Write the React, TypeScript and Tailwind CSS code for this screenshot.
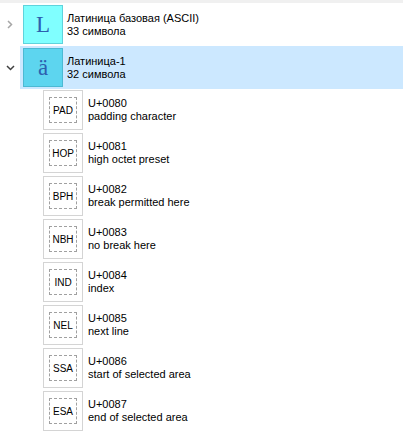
import React from "react";

const groups = [
  { glyph: "L", title: "Латиница базовая (ASCII)", count: "33 символа", open: false },
  { glyph: "ä", title: "Латиница-1", count: "32 символа", open: true },
];

const chars = [
  { abbr: "PAD", code: "U+0080", name: "padding character" },
  { abbr: "HOP", code: "U+0081", name: "high octet preset" },
  { abbr: "BPH", code: "U+0082", name: "break permitted here" },
  { abbr: "NBH", code: "U+0083", name: "no break here" },
  { abbr: "IND", code: "U+0084", name: "index" },
  { abbr: "NEL", code: "U+0085", name: "next line" },
  { abbr: "SSA", code: "U+0086", name: "start of selected area" },
  { abbr: "ESA", code: "U+0087", name: "end of selected area" },
];

const Chevron = ({ open }: { open: boolean }) =>
  open ? (
    <svg width="9" height="6" viewBox="0 0 9 6" className="text-[#404040]">
      <path d="M1 1l3.5 3.5L8 1" fill="none" stroke="currentColor" strokeWidth="1.5" />
    </svg>
  ) : (
    <svg width="6" height="9" viewBox="0 0 6 9" className="text-[#a6a6a6]">
      <path d="M1 1l3.5 3.5L1 8" fill="none" stroke="currentColor" strokeWidth="1.5" />
    </svg>
  );

export default function App() {
  return (
    <div className="w-[403px] h-[435px] bg-white overflow-hidden font-['Liberation_Sans',sans-serif] text-[11px] leading-[13px] text-black">
      <div className="h-[3px] bg-[#f0f0f0]" />
      {groups.map((g) => (
        <div key={g.title} className="flex h-[43px]">
          <div className="w-[20px] flex items-center justify-center">
            <Chevron open={g.open} />
          </div>
          <div className={`flex flex-1 items-center ${g.open ? "bg-[#cce8ff]" : ""}`}>
            <div
              className={`ml-[3px] w-[40px] h-[39px] flex items-center justify-center border font-['Liberation_Serif',serif] text-[23px] text-[#2e5fae] ${
                g.open ? "bg-[#5dd5ef] border-[#4cb9d3]" : "bg-[#80ffff] border-[#5fd3dc]"
              }`}
            >
              {g.glyph}
            </div>
            <div className="ml-[4px] flex flex-col">
              <span>{g.title}</span>
              <span>{g.count}</span>
            </div>
          </div>
        </div>
      ))}
      {chars.map((c) => (
        <div key={c.code} className="flex h-[43px] pl-[43px] pt-[1px]">
          <div className="w-[40px] h-[40px] border border-[#d4d4d4] flex items-center justify-center">
            <div className="w-[28px] h-[26px] border border-dashed border-[#a0a0a0] flex items-center justify-center text-[10px] text-black">
              {c.abbr}
            </div>
          </div>
          <div className="ml-[5px] flex flex-col justify-center pb-[2px]">
            <span>{c.code}</span>
            <span>{c.name}</span>
          </div>
        </div>
      ))}
    </div>
  );
}
